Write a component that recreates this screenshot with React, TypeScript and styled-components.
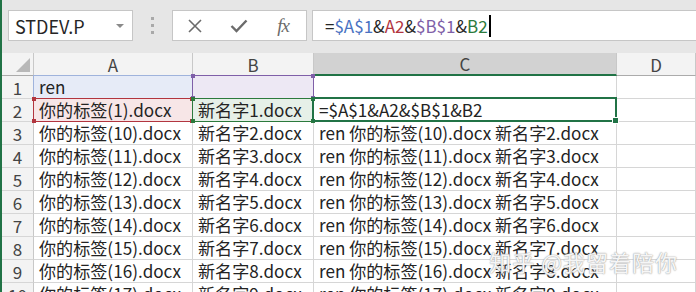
import React from 'react'
import styled, { createGlobalStyle } from 'styled-components'

const GlobalStyle = createGlobalStyle`
  html, body {
    margin: 0;
    padding: 0;
    background: #ffffff;
  }
  body {
    font-family: "Noto Sans CJK SC", "Noto Sans", sans-serif;
  }
`

const GREEN = '#217346'

const Window = styled.div`
  position: relative;
  width: 696px;
  height: 292px;
  overflow: hidden;
  box-sizing: border-box;
  background: #e6e6e6;
  border-left: 2px solid ${GREEN};
  display: flex;
  flex-direction: column;
`

const FormulaBar = styled.div`
  flex: none;
  height: 53px;
  box-sizing: border-box;
  padding: 10px 0 0 6px;
  display: flex;
  align-items: flex-start;
`

const NameBox = styled.div`
  flex: none;
  width: 125px;
  height: 31px;
  box-sizing: border-box;
  background: #fff;
  border: 1px solid #c6c6c6;
  display: flex;
  align-items: center;
  justify-content: space-between;
  padding: 0 8px 0 6px;
  font-size: 18px;
  color: #262626;
`

const DropArrow = styled.span`
  width: 0;
  height: 0;
  border-left: 4px solid transparent;
  border-right: 4px solid transparent;
  border-top: 4px solid #8a8a8a;
`

const Grip = styled.div`
  flex: none;
  width: 39px;
  height: 31px;
  display: flex;
  flex-direction: column;
  align-items: center;
  justify-content: center;
  gap: 4px;

  span {
    width: 3px;
    height: 3px;
    background: #a9a9a9;
  }
`

const ButtonGroup = styled.div`
  flex: none;
  width: 135px;
  height: 31px;
  box-sizing: border-box;
  background: #fff;
  border: 1px solid #c6c6c6;
  display: flex;
  align-items: center;
`

const ToolButton = styled.div`
  width: 44px;
  height: 29px;
  display: flex;
  align-items: center;
  justify-content: center;
  color: #6b6b6b;
`

const Fx = styled.span`
  font-family: "Liberation Serif", "DejaVu Serif", serif;
  font-style: italic;
  font-size: 19px;
  color: #6b6b6b;
  letter-spacing: -1px;
`

const FormulaInput = styled.div`
  flex: none;
  width: 400px;
  height: 31px;
  margin-left: 5px;
  box-sizing: border-box;
  background: #fff;
  border: 1px solid #c6c6c6;
  display: flex;
  align-items: center;
  padding-left: 12px;
  font-size: 17px;
  color: #262626;
  white-space: nowrap;
`

const Ref = styled.span<{ $color: string }>`
  color: ${({ $color }) => $color};
`

const Caret = styled.span`
  display: inline-block;
  width: 2px;
  height: 22px;
  margin-left: 1px;
  background: #000;
`

const Sheet = styled.div`
  flex: none;
  display: grid;
  grid-template-columns: 32px 159px 121px 303px 79px;
  grid-auto-rows: 23px;
  background: #fff;
`

const Corner = styled.div`
  position: relative;
  background: #f3f3f3;
  box-sizing: border-box;
  border-right: 1px solid #c8c8c8;
  border-bottom: 1px solid #ababab;

  &::after {
    content: '';
    position: absolute;
    right: 3px;
    bottom: 3px;
    width: 0;
    height: 0;
    border-left: 14px solid transparent;
    border-bottom: 14px solid #b8b8b8;
  }
`

const ColHead = styled.div<{ $active?: boolean }>`
  box-sizing: border-box;
  background: ${({ $active }) => ($active ? '#d2d2d2' : '#f3f3f3')};
  border-right: 1px solid #c8c8c8;
  border-bottom: ${({ $active }) => ($active ? `2px solid ${GREEN}` : '1px solid #ababab')};
  display: flex;
  align-items: center;
  justify-content: center;
  font-size: 17px;
  color: #444;
`

const RowHead = styled.div`
  box-sizing: border-box;
  background: #f3f3f3;
  border-right: 1px solid #c8c8c8;
  border-bottom: 1px solid #d6d6d6;
  display: flex;
  align-items: center;
  justify-content: center;
  font-size: 17px;
  color: #444;
`

const Cell = styled.div<{ $fill?: string }>`
  position: relative;
  box-sizing: border-box;
  background: ${({ $fill }) => $fill || '#fff'};
  border-right: 1px solid #d6d6d6;
  border-bottom: 1px solid #d6d6d6;
  display: flex;
  align-items: center;
  padding: 0 4px 1px 5px;
  font-size: 17.1px;
  color: #232323;
  white-space: nowrap;
`

const RangeBox = styled.div<{ $color: string }>`
  position: absolute;
  inset: -1px;
  border: 1px solid ${({ $color }) => $color};
  z-index: 2;
  pointer-events: none;
`

const Handle = styled.span<{ $color: string; $x: 'left' | 'right'; $y: 'top' | 'bottom' }>`
  position: absolute;
  width: 4px;
  height: 4px;
  background: ${({ $color }) => $color};
  ${({ $x }) => $x}: -2px;
  ${({ $y }) => $y}: -2px;
`

const Selection = styled.div`
  position: absolute;
  top: -2px;
  left: -2px;
  right: -1px;
  bottom: -1px;
  border: 2px solid ${GREEN};
  z-index: 3;
  pointer-events: none;
`

const FillHandle = styled.span`
  position: absolute;
  right: -4px;
  bottom: -4px;
  width: 5px;
  height: 5px;
  background: ${GREEN};
  border: 1px solid #fff;
`

const Watermark = styled.div`
  position: absolute;
  right: 18px;
  bottom: 15px;
  z-index: 5;
  font-size: 22px;
  color: rgba(255, 255, 255, 0.92);
  text-shadow: 0 0 1px #9a9a9a, 0 0 2px #b5b5b5;
  letter-spacing: 1px;
  white-space: nowrap;
`

function Range({ color, corners = true }: { color: string; corners?: boolean }) {
  return (
    <RangeBox $color={color}>
      {corners && (
        <>
          <Handle $color={color} $x="left" $y="top" />
          <Handle $color={color} $x="right" $y="top" />
          <Handle $color={color} $x="left" $y="bottom" />
          <Handle $color={color} $x="right" $y="bottom" />
        </>
      )}
    </RangeBox>
  )
}

const BLUE = '#4a72c2'
const RED = '#b2353f'
const PURPLE = '#7f5fa8'
const REFGREEN = '#2c7a3c'

type Row = { n: number; a: string; b: string; c: string }

const rows: Row[] = [
  { n: 1, a: 'ren', b: '', c: '' },
  { n: 2, a: '你的标签(1).docx', b: '新名字1.docx', c: '=$A$1&A2&$B$1&B2' },
]
for (let i = 3; i <= 10; i++) {
  const a = `你的标签(${i + 7}).docx`
  const b = `新名字${i - 1}.docx`
  rows.push({ n: i, a, b, c: `ren ${a} ${b}` })
}

export default function App() {
  return (
    <Window>
      <GlobalStyle />
      <FormulaBar>
        <NameBox>
          STDEV.P
          <DropArrow />
        </NameBox>
        <Grip>
          <span />
          <span />
          <span />
        </Grip>
        <ButtonGroup>
          <ToolButton>
            <svg width="16" height="16" viewBox="0 0 16 16" fill="none" stroke="currentColor" strokeWidth="1.6">
              <path d="M2 2 L14 14 M14 2 L2 14" />
            </svg>
          </ToolButton>
          <ToolButton>
            <svg width="18" height="14" viewBox="0 0 18 14" fill="none" stroke="currentColor" strokeWidth="2.4">
              <path d="M1.5 7 L6.5 12 L16.5 1.5" />
            </svg>
          </ToolButton>
          <ToolButton>
            <Fx>fx</Fx>
          </ToolButton>
        </ButtonGroup>
        <FormulaInput>
          =<Ref $color={BLUE}>$A$1</Ref>&amp;<Ref $color={RED}>A2</Ref>&amp;
          <Ref $color={PURPLE}>$B$1</Ref>&amp;<Ref $color={REFGREEN}>B2</Ref>
          <Caret />
        </FormulaInput>
      </FormulaBar>

      <Sheet>
        <Corner />
        <ColHead>A</ColHead>
        <ColHead>B</ColHead>
        <ColHead $active>C</ColHead>
        <ColHead>D</ColHead>
        {rows.map((r) => (
          <React.Fragment key={r.n}>
            <RowHead>{r.n}</RowHead>
            <Cell $fill={r.n === 1 ? '#e6ebf7' : r.n === 2 ? '#f7e6e7' : undefined}>
              {r.a}
              {r.n === 1 && <Range color="#9fb3dc" corners={false} />}
              {r.n === 2 && <Range color={RED} />}
            </Cell>
            <Cell $fill={r.n === 1 ? '#ede8f4' : r.n === 2 ? '#e6f0e8' : undefined}>
              {r.b}
              {r.n === 1 && <Range color={PURPLE} />}
              {r.n === 2 && <Range color={REFGREEN} />}
            </Cell>
            <Cell>
              {r.c}
              {r.n === 2 && (
                <Selection>
                  <FillHandle />
                </Selection>
              )}
            </Cell>
            <Cell />
          </React.Fragment>
        ))}
      </Sheet>

      <Watermark>知乎 @我留着陪你</Watermark>
    </Window>
  )
}
